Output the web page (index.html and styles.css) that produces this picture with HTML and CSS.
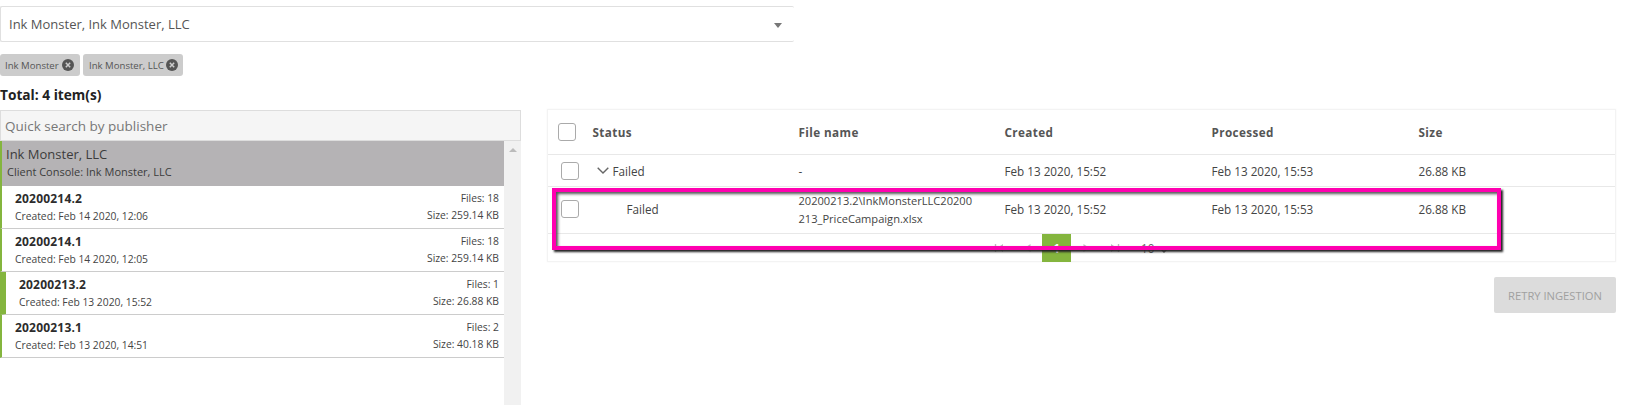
FILE: index.html
```html
<!doctype html>
<html lang="en">
<head>
<meta charset="utf-8">
<title>Ingestion</title>
<link rel="stylesheet" href="styles.css">
</head>
<body>

<div class="top">
	<div class="select">
		<span>Ink Monster, Ink Monster, LLC</span>
		<span class="select__caret"></span>
	</div>

	<div class="tags">
		<span class="tag">Ink Monster <svg class="tag__x" viewBox="0 0 12 12"><circle cx="6" cy="6" r="6" fill="#555"/><path d="M3.8 3.8l4.4 4.4M8.2 3.8L3.8 8.2" stroke="#ccc" stroke-width="1.5"/></svg></span>
		<span class="tag">Ink Monster, LLC <svg class="tag__x" viewBox="0 0 12 12"><circle cx="6" cy="6" r="6" fill="#555"/><path d="M3.8 3.8l4.4 4.4M8.2 3.8L3.8 8.2" stroke="#ccc" stroke-width="1.5"/></svg></span>
	</div>

	<div class="total">Total: 4 item(s)</div>
</div>

<div class="main">
	<div class="side">
		<div class="search">Quick search by publisher</div>

		<div class="list-wrap">
			<div class="list">
				<div class="pub">
					<div class="pub__name">Ink Monster, LLC</div>
					<div class="pub__sub">Client Console: Ink Monster, LLC</div>
				</div>

				<div class="item">
					<div><b>20200214.2</b><span>Created: Feb 14 2020, 12:06</span></div>
					<div class="item__right"><span>Files: 18</span><span>Size: 259.14 KB</span></div>
				</div>
				<div class="item">
					<div><b>20200214.1</b><span>Created: Feb 14 2020, 12:05</span></div>
					<div class="item__right"><span>Files: 18</span><span>Size: 259.14 KB</span></div>
				</div>
				<div class="item --active">
					<div><b>20200213.2</b><span>Created: Feb 13 2020, 15:52</span></div>
					<div class="item__right"><span>Files: 1</span><span>Size: 26.88 KB</span></div>
				</div>
				<div class="item">
					<div><b>20200213.1</b><span>Created: Feb 13 2020, 14:51</span></div>
					<div class="item__right"><span>Files: 2</span><span>Size: 40.18 KB</span></div>
				</div>
			</div>
			<div class="scroll"><span class="scroll__up"></span></div>
		</div>
	</div>

	<div class="content">
		<div class="card">
			<div class="row row--head">
				<div><span class="check check--head"></span></div>
				<div>Status</div>
				<div>File name</div>
				<div>Created</div>
				<div>Processed</div>
				<div>Size</div>
			</div>
			<div class="row row--one">
				<div><span class="check"></span></div>
				<div class="status"><svg class="chev" viewBox="0 0 12 7"><path d="M.7.7L6 6l5.3-5.3" fill="none" stroke="#666" stroke-width="1.4"/></svg>Failed</div>
				<div>-</div>
				<div>Feb 13 2020, 15:52</div>
				<div>Feb 13 2020, 15:53</div>
				<div>26.88 KB</div>
			</div>
			<div class="row row--two">
				<div><span class="check"></span></div>
				<div class="status status--child">Failed</div>
				<div class="file">20200213.2\InkMonsterLLC20200213_PriceCampaign.xlsx</div>
				<div>Feb 13 2020, 15:52</div>
				<div>Feb 13 2020, 15:53</div>
				<div>26.88 KB</div>
			</div>
			<div class="pager">
				<span class="pager__btn">
					<svg viewBox="0 0 10 10"><path d="M1.5 1v8" stroke="#bbb" stroke-width="1.4"/><path d="M9 1v8L3 5z" fill="#bbb"/></svg>
				</span>
				<span class="pager__btn">
					<svg viewBox="0 0 10 10"><path d="M7.5 1v8L1.5 5z" fill="#bbb"/></svg>
				</span>
				<span class="pager__cur">1</span>
				<span class="pager__btn">
					<svg viewBox="0 0 10 10"><path d="M2.5 1v8l6-4z" fill="#bbb"/></svg>
				</span>
				<span class="pager__btn">
					<svg viewBox="0 0 10 10"><path d="M8.5 1v8" stroke="#bbb" stroke-width="1.4"/><path d="M1 1v8l6-4z" fill="#bbb"/></svg>
				</span>
				<span class="pager__size">10 <svg class="pager__chev" viewBox="0 0 10 6"><path d="M.7.7L5 5 9.3.7" fill="none" stroke="#666" stroke-width="1.4"/></svg></span>
			</div>
		</div>

		<div class="actions">
			<button type="button" class="retry">RETRY INGESTION</button>
		</div>
	</div>
</div>

<div class="highlight"></div>

</body>
</html>
```

FILE: styles.css
```css
body {
	margin: 0;
	height: 405px;
	overflow: hidden;
	background: #fff;
	color: #444;
	font-family: 'Open Sans', sans-serif;
	font-size: 11.7px;
}

.top {
	box-sizing: border-box;
	height: 110px;
	padding-top: 6px;
}

.select {
	display: flex;
	align-items: center;
	justify-content: space-between;
	box-sizing: border-box;
	width: 794px;
	height: 36px;
	padding: 0 12px 0 8px;
	border: 1px solid #e0e0e0;
	border-right: 0;
	border-radius: 2px;
	font-size: 13px;
	color: #555;
}

.select__caret {
	margin-top: 2px;
	border-left: 4px solid transparent;
	border-right: 4px solid transparent;
	border-top: 5px solid #777;
}

.tags {
	display: flex;
	gap: 3px;
	margin-top: 12px;
}

.tag {
	display: flex;
	align-items: center;
	justify-content: space-between;
	box-sizing: border-box;
	height: 22px;
	padding: 0 6px 0 5px;
	background: #ccc;
	border-radius: 3px;
	font-size: 9.6px;
	color: #555;
}
.tag:first-child {
	width: 80px;
}
.tag:last-child {
	width: 100px;
	padding: 0 5px 0 6px;
}

.tag__x {
	width: 12px;
	height: 12px;
}

.total {
	margin-top: 11px;
	font-size: 13.7px;
	font-weight: 700;
	line-height: 16px;
	color: #222;
}

.main {
	display: flex;
	height: 295px;
}

.side {
	display: flex;
	flex-direction: column;
	width: 521px;
	flex: none;
}

.search {
	box-sizing: border-box;
	height: 31px;
	padding-left: 4px;
	border: 1px solid #ddd;
	background: #f5f5f5;
	font-size: 13.5px;
	line-height: 31px;
	color: #777;
}

.list-wrap {
	display: flex;
	flex: 1;
}

.list {
	flex: 1;
}

.scroll {
	display: flex;
	justify-content: center;
	width: 17px;
	padding-top: 7px;
	background: #f1f1f1;
}

.scroll__up {
	width: 0;
	height: 0;
	border-left: 4px solid transparent;
	border-right: 4px solid transparent;
	border-bottom: 4px solid #bbb;
}

.pub {
	box-sizing: border-box;
	height: 45px;
	padding: 4px 0 0 4px;
	border-left: 2px solid #84b53e;
	background: #b5b3b5;
	color: #3c3c3c;
}

.pub__name {
	font-size: 13px;
	line-height: 18px;
}

.pub__sub {
	padding-left: 1px;
	font-size: 11px;
	line-height: 18px;
}

.item {
	display: flex;
	justify-content: space-between;
	box-sizing: border-box;
	height: 43px;
	padding: 4px 5px 0 13px;
	border-left: 2px solid #84b53e;
	border-bottom: 1px solid #ccc;
	font-size: 10.3px;
	line-height: 17px;
	color: #444;
}
.item b,
.item span {
	display: block;
}
.item b {
	font-size: 12px;
	line-height: 18px;
	letter-spacing: 0.2px;
	color: #2c2c2c;
}

.item__right {
	text-align: right;
}

.--active {
	padding-left: 13px;
	border-left-width: 6px;
}

.content {
	flex: none;
	width: 1069px;
	margin-left: 26px;
}

.card {
	box-sizing: border-box;
	height: 153px;
	margin-top: -1px;
	border: 1px solid #f3f3f3;
	box-shadow: 0 0 2px rgba(0, 0, 0, 0.04);
}

.row {
	display: grid;
	grid-template-columns: 44.5px 206px 206px 207px 207px 1fr;
	align-items: center;
	box-sizing: border-box;
	border-bottom: 1px solid #e8e8e8;
}

.row--head {
	height: 45px;
	font-weight: 700;
	letter-spacing: 0.4px;
	color: #555;
}
.row--one {
	height: 32px;
}
.row--two {
	height: 47px;
	padding-bottom: 2px;
}

.check {
	display: block;
	box-sizing: border-box;
	width: 18px;
	height: 18px;
	margin-left: 13px;
	border: 1px solid #aaa;
	border-radius: 3px;
	background: #fff;
}
.check--head {
	margin-left: 10px;
}

.status {
	display: flex;
	align-items: center;
	padding-left: 4px;
}
.status--child {
	padding-left: 34px;
}

.chev {
	width: 12px;
	height: 7px;
	margin-right: 4px;
}

.file {
	width: 176px;
	margin-top: 2px;
	font-size: 11.1px;
	line-height: 18px;
	word-break: break-all;
}

.pager {
	display: flex;
	align-items: center;
	height: 28px;
	padding-left: 436px;
	color: #666;
}

.pager__btn {
	display: flex;
	align-items: center;
	justify-content: center;
	width: 29px;
	height: 28px;
}
.pager__btn svg {
	width: 10px;
	height: 10px;
}

.pager__cur {
	width: 29px;
	height: 28px;
	background: #84b53e;
	color: #fff;
	font-weight: 700;
	text-align: center;
	line-height: 28px;
}

.pager__size {
	margin-left: 12px;
}

.pager__chev {
	width: 10px;
	height: 6px;
	margin-left: 2px;
}

.actions {
	display: flex;
	justify-content: flex-end;
	margin-top: 15px;
}

.retry {
	width: 122px;
	height: 36px;
	padding: 0;
	border: 0;
	border-radius: 2px;
	background: #dcdcdc;
	font-family: 'Open Sans', sans-serif;
	font-size: 11.2px;
	color: #a0a0a0;
}

.highlight {
	position: absolute;
	left: 552px;
	top: 188px;
	box-sizing: border-box;
	width: 949px;
	height: 62px;
	border: 4px solid #ff00b0;
	box-shadow: 2px 2px 2px #222, inset 2px 2px 3px #555;
}
```
